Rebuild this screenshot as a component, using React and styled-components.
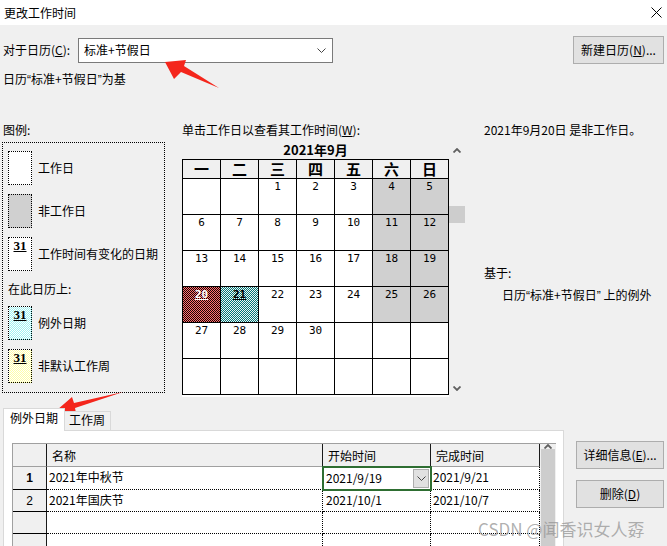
import React from "react";
import styled, { createGlobalStyle, css } from "styled-components";

const Global = createGlobalStyle`
  html, body { margin: 0; padding: 0; background: #f0f0f0; }
  body {
    font-family: "Noto Sans CJK SC", "Noto Sans", sans-serif;
    font-size: 12px;
    color: #000;
  }
  * { box-sizing: border-box; }
  u { text-decoration: underline; text-underline-offset: 1px; }
`;

const Window = styled.div`
  position: relative;
  width: 667px;
  height: 546px;
  overflow: hidden;
  background: #f0f0f0;
  display: flex;
  flex-direction: column;
`;

const TitleBar = styled.div`
  flex: none;
  height: 25px;
  background: #fff;
  display: flex;
  align-items: center;
  justify-content: space-between;
  padding: 0 5px 0 4px;
`;

const TitleText = styled.span`
  line-height: 16px;
`;

const Body = styled.div`
  flex: 1;
  display: flex;
  flex-direction: column;
  padding-right: 3px;
`;

const TopRow = styled.div`
  display: flex;
  align-items: center;
  height: 28px;
  margin-top: 11px;
  padding-left: 3px;
`;

const FieldLabel = styled.span`
  width: 75px;
  line-height: 16px;
`;

const Combo = styled.div`
  width: 255px;
  height: 25px;
  background: #fff;
  border: 1px solid #7a7a7a;
  display: flex;
  align-items: center;
  justify-content: space-between;
  padding: 0 6px 0 5px;
  line-height: 16px;
`;

const Button = styled.div`
  width: ${(p) => p.$w || 88}px;
  height: 28px;
  background: #e1e1e1;
  border: 1px solid #adadad;
  display: flex;
  align-items: center;
  justify-content: center;
  line-height: 16px;
  margin-left: ${(p) => (p.$push ? "auto" : "0")};
`;

const Note = styled.div`
  line-height: 16px;
  margin-top: ${(p) => p.$mt || 0}px;
  padding-left: ${(p) => p.$pl || 0}px;
  white-space: nowrap;
`;

const Q = styled.span`
  font-family: "Liberation Sans", sans-serif;
  font-size: 12px;
`;

const MainRow = styled.div`
  display: flex;
  height: 275px;
  margin-top: 34px;
`;

const LegendCol = styled.div`
  width: 163px;
  margin-left: 2px;
  display: flex;
  flex-direction: column;
`;

const LegendBox = styled.div`
  margin-top: 4px;
  height: 251px;
  border: 1px dotted #000;
  padding: 8px 0 0 5px;
  display: flex;
  flex-direction: column;
`;

const LegendItem = styled.div`
  display: flex;
  align-items: center;
  gap: 6px;
  margin-bottom: 9px;
  line-height: 16px;
`;

const LegendHeading = styled.div`
  line-height: 16px;
  margin: 1px 0 9px;
`;

const swatchBg = {
  work: "#fff",
  off: "#d0d0d0",
  exception: "repeating-conic-gradient(#9ff3f3 0 25%, #fff 0 50%) 0 0 / 2px 2px",
  week: "repeating-conic-gradient(#ffffa8 0 25%, #fff 0 50%) 0 0 / 2px 2px",
};

const Swatch = styled.div`
  width: 24px;
  height: 34px;
  border: 1px dotted #000;
  background: ${(p) => swatchBg[p.$kind]};
  display: flex;
  justify-content: center;
  padding-top: 1px;
`;

const SwatchNum = styled.span`
  font-family: "Liberation Serif", serif;
  font-weight: 700;
  font-size: 13px;
  line-height: 13px;
  text-decoration: underline;
  text-underline-offset: 1px;
`;

const CalendarCol = styled.div`
  width: 283px;
  margin-left: 17px;
  display: flex;
  flex-direction: column;
`;

const CalWrap = styled.div`
  margin-top: 4px;
  height: 255px;
  display: flex;
`;

const CalBox = styled.div`
  width: 267px;
  background: #fff;
  display: flex;
  flex-direction: column;
`;

const CalTitle = styled.div`
  height: 17px;
  line-height: 16px;
  text-align: center;
  font-weight: 700;
  font-size: 13px;
  background: #f0f0f0;
`;

const CalGrid = styled.div`
  display: grid;
  grid-template-columns: repeat(7, 38px);
  border-left: 1px solid #000;
  border-top: 1px solid #000;
`;

const WeekHead = styled.div`
  height: 19px;
  border-right: 1px solid #000;
  border-bottom: 1px solid #000;
  background: #f0f0f0;
  text-align: center;
  font-weight: 700;
  font-size: 15px;
  line-height: 18px;
`;

const dayBg = {
  work: "#fff",
  off: "#d0d0d0",
  holiday: "repeating-conic-gradient(#ff7272 0 25%, #1a0000 0 50%) 0 0 / 2px 2px",
  exception: "repeating-conic-gradient(#007878 0 25%, #f4f4f4 0 50%) 0 0 / 2px 2px",
};

const DayCell = styled.div`
  height: 36px;
  border-right: 1px solid #000;
  border-bottom: 1px solid #000;
  background: ${(p) => dayBg[p.$kind]};
  text-align: center;
  padding-top: 2px;
  font-family: "DejaVu Sans Mono", monospace;
  font-size: 11px;
  line-height: 12px;
`;

const DayNum = styled.span`
  ${(p) =>
    p.$mark &&
    css`
      font-weight: 700;
      text-decoration: underline;
      color: ${p.$mark};
    `}
`;

const CalScroll = styled.div`
  width: 16px;
  display: flex;
  flex-direction: column;
  background: #f0f0f0;
`;

const ScrollBtn = styled.div`
  height: 17px;
  display: flex;
  align-items: center;
  justify-content: center;
`;

const ScrollTrack = styled.div`
  flex: 1;
  padding-top: ${(p) => p.$pt || 0}px;
`;

const Thumb = styled.div`
  height: ${(p) => p.$h}px;
  background: #cdcdcd;
  margin: 0 ${(p) => p.$mx || 0}px;
`;

const InfoCol = styled.div`
  margin-left: 19px;
  display: flex;
  flex-direction: column;
`;

const BottomRow = styled.div`
  flex: 1;
  display: flex;
`;

const TabArea = styled.div`
  width: 561px;
  margin-left: 3px;
  display: flex;
  flex-direction: column;
`;

const TabStrip = styled.div`
  height: 33px;
  display: flex;
  align-items: flex-end;
`;

const Tab = styled.div`
  position: relative;
  z-index: 1;
  line-height: 16px;
  border: 1px solid #d9d9d9;
  border-bottom: none;
  display: flex;
  align-items: center;
  ${(p) =>
    p.$active
      ? css`
          height: 23px;
          margin-bottom: -1px;
          background: #fff;
          padding: 0 6px 5px 6px;
          width: 62px;
        `
      : css`
          height: 19px;
          background: #f0f0f0;
          padding: 0 4px 2px 4px;
          width: 46px;
          border-left: none;
        `}
`;

const TabPanel = styled.div`
  flex: 1;
  background: #fff;
  border: 1px solid #d9d9d9;
  padding: 12px 0 0 8px;
`;

const Grid = styled.div`
  display: grid;
  grid-template-columns: 34px 276px 108px 109px 16px;
  grid-template-rows: 23px 23px 22px 22px 22px;
  border-left: 1px solid #a0a0a0;
  border-top: 1px solid #a0a0a0;
  width: 544px;
`;

const HeadCell = styled.div`
  background: #f0f0f0;
  border-right: 1px solid #1a1a1a;
  border-bottom: 1px solid #a0a0a0;
  display: flex;
  align-items: flex-end;
  padding: 0 0 2px 5px;
  line-height: 16px;
`;

const RowHead = styled.div`
  background: #f0f0f0;
  border-right: 1px solid #1a1a1a;
  border-bottom: 1px solid #000;
  display: flex;
  align-items: center;
  justify-content: center;
  font-family: "Liberation Sans", sans-serif;
  font-weight: ${(p) => (p.$bold ? 700 : 400)};
  font-size: 12px;
`;

const Cell = styled.div`
  position: relative;
  border-right: 1px dotted #000;
  border-bottom: 1px dotted #000;
  display: flex;
  align-items: center;
  justify-content: space-between;
  padding: 0 1px 2px ${(p) => p.$pl ?? 2}px;
  line-height: 16px;
  ${(p) =>
    p.$selected &&
    css`
      outline: 2px solid #2e6e32;
      outline-offset: -1px;
      z-index: 1;
      padding-bottom: 0;
    `}
`;

const DropBtn = styled.div`
  width: 16px;
  height: 19px;
  background: #e1e1e1;
  border: 1px solid #adadad;
  display: flex;
  align-items: center;
  justify-content: center;
`;

const GridScroll = styled.div`
  grid-column: 5;
  grid-row: 1 / span 5;
  background: #f0f0f0;
  display: flex;
  flex-direction: column;
`;

const SideButtons = styled.div`
  margin-left: 12px;
  padding-top: 44px;
  display: flex;
  flex-direction: column;
  gap: 11px;
`;

const Watermark = styled.div`
  position: absolute;
  left: 478px;
  top: 519px;
  font-size: 17px;
  line-height: 20px;
  color: rgba(150, 150, 150, 0.75);
  white-space: nowrap;
`;

const Annot = styled.svg`
  position: absolute;
  left: 0;
  top: 0;
  pointer-events: none;
`;

const CloseIcon = () => (
  <svg width="11" height="11" viewBox="0 0 11 11">
    <path d="M0.5 0.5 L10.5 10.5 M10.5 0.5 L0.5 10.5" stroke="#000" strokeWidth="1" />
  </svg>
);

const SmallChevron = () => (
  <svg width="9" height="5" viewBox="0 0 9 5">
    <path d="M0.5 0.5 L4.5 4.5 L8.5 0.5" stroke="#444" strokeWidth="1" fill="none" />
  </svg>
);

const Caret = ({ up }) => (
  <svg width="8" height="5" viewBox="0 0 8 5">
    <path
      d={up ? "M0.5 4.5 L4 1 L7.5 4.5" : "M0.5 0.5 L4 4 L7.5 0.5"}
      stroke="#606060"
      strokeWidth="1.8"
      fill="none"
    />
  </svg>
);

const weekDays = ["一", "二", "三", "四", "五", "六", "日"];
const weeks = [
  [null, null, 1, 2, 3, 4, 5],
  [6, 7, 8, 9, 10, 11, 12],
  [13, 14, 15, 16, 17, 18, 19],
  [20, 21, 22, 23, 24, 25, 26],
  [27, 28, 29, 30, null, null, null],
  [null, null, null, null, null, null, null],
];

const dayKind = (d, col) => {
  if (d === 20) return "holiday";
  if (d === 21) return "exception";
  if (d && col >= 5) return "off";
  return "work";
};

const dayMark = (d) => (d === 20 ? "#fff" : d === 21 ? "#000" : null);

const legend = [
  { kind: "work", label: "工作日" },
  { kind: "off", label: "非工作日" },
  { kind: "work", label: "工作时间有变化的日期", num: true },
];
const legend2 = [
  { kind: "exception", label: "例外日期", num: true },
  { kind: "week", label: "非默认工作周", num: true },
];

const rows = [
  { n: "1", bold: true, name: "2021年中秋节", start: "2021/9/19", end: "2021/9/21", sel: true },
  { n: "2", name: "2021年国庆节", start: "2021/10/1", end: "2021/10/7" },
  { n: "" },
  { n: "" },
];

export default function App() {
  return (
    <Window>
      <Global />
      <TitleBar>
        <TitleText>更改工作时间</TitleText>
        <CloseIcon />
      </TitleBar>
      <Body>
        <TopRow>
          <FieldLabel>
            对于日历(<u>C</u>):
          </FieldLabel>
          <Combo>
            <span>标准+节假日</span>
            <SmallChevron />
          </Combo>
          <Button $w={91} $push>
            新建日历(<u>N</u>)...
          </Button>
        </TopRow>
        <Note $mt={7} $pl={3}>
          日历<Q>“</Q>标准+节假日<Q>”</Q>为基
        </Note>

        <MainRow>
          <LegendCol>
            <Note $pl={1}>图例:</Note>
            <LegendBox>
              {legend.map((it, i) => (
                <LegendItem key={i}>
                  <Swatch $kind={it.kind}>{it.num && <SwatchNum>31</SwatchNum>}</Swatch>
                  <span>{it.label}</span>
                </LegendItem>
              ))}
              <LegendHeading>在此日历上:</LegendHeading>
              {legend2.map((it, i) => (
                <LegendItem key={i}>
                  <Swatch $kind={it.kind}>{it.num && <SwatchNum>31</SwatchNum>}</Swatch>
                  <span>{it.label}</span>
                </LegendItem>
              ))}
            </LegendBox>
          </LegendCol>

          <CalendarCol>
            <Note>
              单击工作日以查看其工作时间(<u>W</u>):
            </Note>
            <CalWrap>
              <CalBox>
                <CalTitle>2021年9月</CalTitle>
                <CalGrid>
                  {weekDays.map((w) => (
                    <WeekHead key={w}>{w}</WeekHead>
                  ))}
                  {weeks.map((wk, r) =>
                    wk.map((d, c) => (
                      <DayCell key={`${r}-${c}`} $kind={dayKind(d, c)}>
                        {d && <DayNum $mark={dayMark(d)}>{d}</DayNum>}
                      </DayCell>
                    ))
                  )}
                </CalGrid>
              </CalBox>
              <CalScroll>
                <ScrollBtn>
                  <Caret up />
                </ScrollBtn>
                <ScrollTrack $pt={47}>
                  <Thumb $h={17} />
                </ScrollTrack>
                <ScrollBtn>
                  <Caret />
                </ScrollBtn>
              </CalScroll>
            </CalWrap>
          </CalendarCol>

          <InfoCol>
            <Note>2021年9月20日 是非工作日。</Note>
            <Note $mt={127}>基于:</Note>
            <Note $mt={6} $pl={18}>
              日历<Q>“</Q>标准+节假日<Q>”</Q> 上的例外
            </Note>
          </InfoCol>
        </MainRow>

        <BottomRow>
          <TabArea>
            <TabStrip>
              <Tab $active>例外日期</Tab>
              <Tab>工作周</Tab>
            </TabStrip>
            <TabPanel>
              <Grid>
                <HeadCell />
                <HeadCell>名称</HeadCell>
                <HeadCell>开始时间</HeadCell>
                <HeadCell>完成时间</HeadCell>
                <GridScroll>
                  <ScrollBtn>
                    <Caret up />
                  </ScrollBtn>
                  <ScrollTrack>
                    <Thumb $h={120} $mx={1} />
                  </ScrollTrack>
                </GridScroll>
                {rows.map((r, i) => (
                  <React.Fragment key={i}>
                    <RowHead $bold={r.bold}>{r.n}</RowHead>
                    <Cell>{r.name}</Cell>
                    <Cell $pl={3} $selected={r.sel}>
                      <span>{r.start}</span>
                      {r.sel && (
                        <DropBtn>
                          <SmallChevron />
                        </DropBtn>
                      )}
                    </Cell>
                    <Cell $pl={2}>{r.end}</Cell>
                  </React.Fragment>
                ))}
              </Grid>
            </TabPanel>
          </TabArea>
          <SideButtons>
            <Button $w={88}>
              详细信息(<u>E</u>)...
            </Button>
            <Button $w={88}>
              删除(<u>D</u>)
            </Button>
          </SideButtons>
        </BottomRow>
      </Body>

      <Watermark>CSDN @闻香识女人孬</Watermark>

      <Annot width="667" height="546" viewBox="0 0 667 546">
        <polygon
          points="165,62 186,60 184,66 219,88 181,72 174,79"
          fill="#f4261c"
        />
        <polygon
          points="57,410 72,397 74,403 123,392 75,408 76,413"
          fill="#f4261c"
        />
      </Annot>
    </Window>
  );
}
